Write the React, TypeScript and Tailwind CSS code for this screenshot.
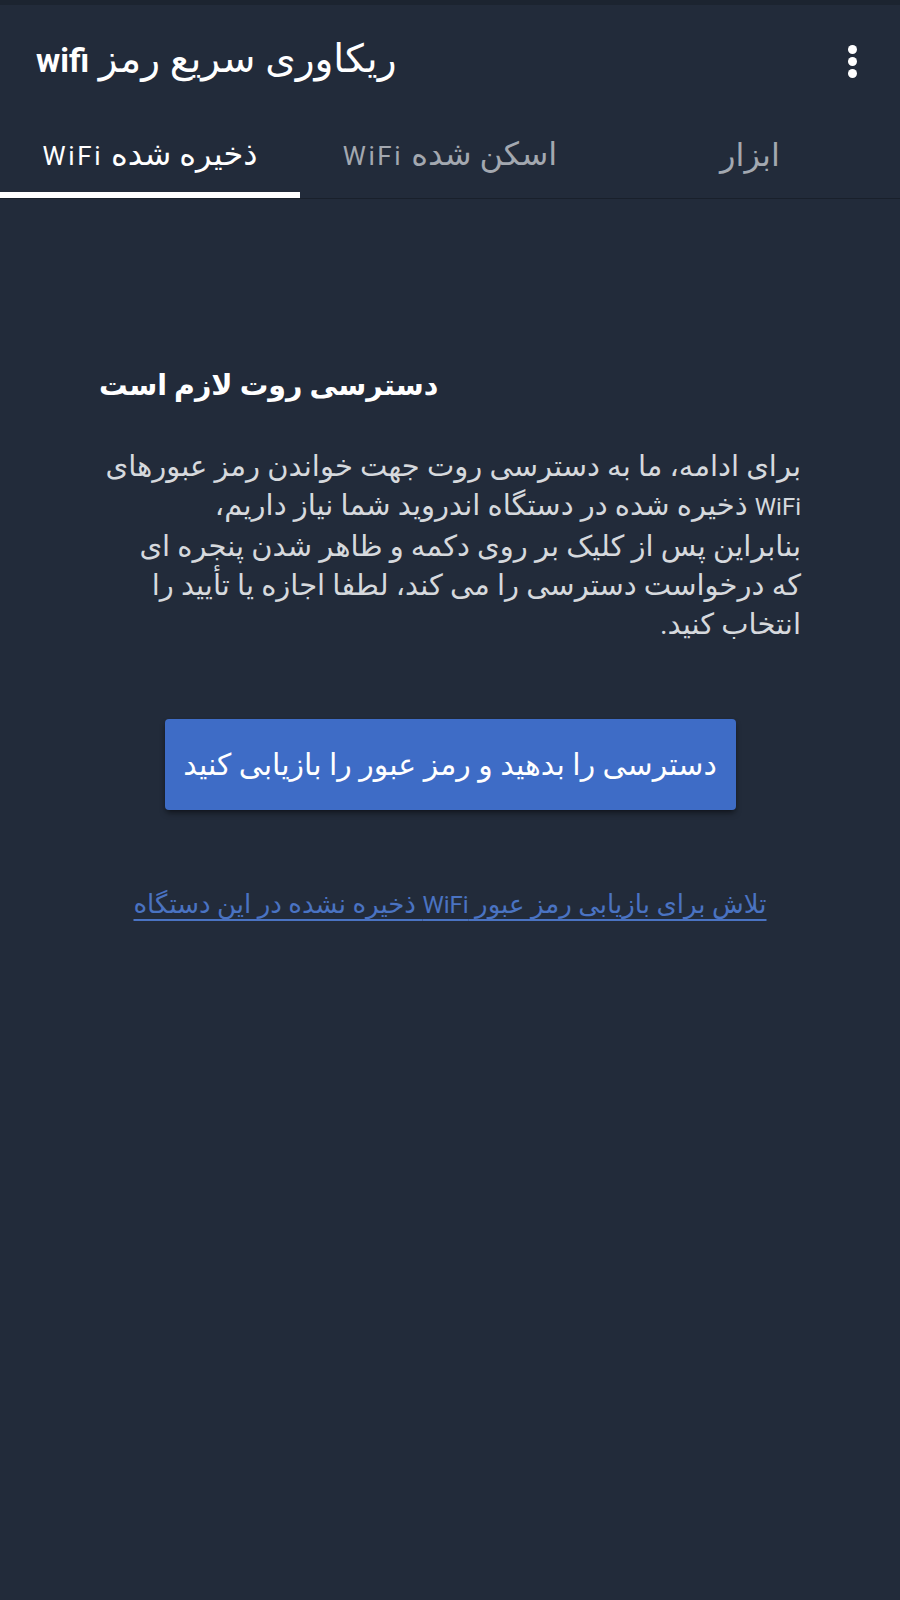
import React from 'react';

const tabs = [
  { id: 'saved', label: 'ذخیره شده WiFi', active: true },
  { id: 'scanned', label: 'اسکن شده WiFi', active: false },
  { id: 'tools', label: 'ابزار', active: false },
];

const bodyLines = [
  'برای ادامه، ما به دسترسی روت جهت خواندن رمز عبورهای',
  'WiFi ذخیره شده در دستگاه اندروید شما نیاز داریم،',
  'بنابراین پس از کلیک بر روی دکمه و ظاهر شدن پنجره ای',
  'که درخواست دسترسی را می کند، لطفا اجازه یا تأیید را',
  'انتخاب کنید.',
];

// Persian glyphs fall back to a much smaller face than the Latin one,
// so the latin words get their own size.
const Mixed = ({ text, latin }: { text: string; latin: string }) => (
  <>
    {text.split(/(WiFi|wifi)/).map((part, i) =>
      /^(WiFi|wifi)$/.test(part) ? (
        <span key={i} className={latin}>
          {part}
        </span>
      ) : (
        <React.Fragment key={i}>{part}</React.Fragment>
      )
    )}
  </>
);

const KebabMenu = () => (
  <button className="flex flex-col items-center gap-[3px] px-2" aria-label="More options">
    <span className="w-[9px] h-[9px] rounded-full bg-white" />
    <span className="w-[9px] h-[9px] rounded-full bg-white" />
    <span className="w-[9px] h-[9px] rounded-full bg-white" />
  </button>
);

export default function App() {
  return (
    <div
      className="w-[900px] h-[1600px] bg-[#222b3a] text-white overflow-hidden"
      style={{ fontFamily: "Roboto, 'DejaVu Sans', sans-serif" }}
    >
      {/* status strip */}
      <div className="h-[5px] bg-[#1c2430]" />

      {/* app bar */}
      <header className="h-[113px] flex items-center justify-between pl-[36px] pr-[35px]">
        <h1 dir="rtl" className="text-[39px] leading-[48px] -mt-[3px]">
          <Mixed text="ریکاوری سریع رمز wifi" latin="text-[33px] font-bold" />
        </h1>
        <KebabMenu />
      </header>

      {/* tabs */}
      <nav className="border-b border-[#19202b]">
        <div className="grid grid-cols-3 h-[74px]">
          {tabs.map((tab) => (
            <div
              key={tab.id}
              dir="rtl"
              className={`flex items-center justify-center text-[32px] leading-[40px] ${
                tab.active ? 'text-white' : 'text-[#a3a8b0]'
              }`}
            >
              <span>
                <Mixed text={tab.label} latin="text-[26px] tracking-[0.1em]" />
              </span>
            </div>
          ))}
        </div>
        <div className="w-[300px] h-[6px] bg-white" />
      </nav>

      {/* content */}
      <main className="px-[99px] pt-[166px]">
        <h2 dir="rtl" className="text-left text-[28.5px] font-bold leading-[42px]">
          دسترسی روت لازم است
        </h2>

        <p
          dir="rtl"
          className="mt-[40px] text-right text-[29px] leading-[39px] text-[#d6d9dd] whitespace-nowrap"
        >
          {bodyLines.map((line, i) => (
            <React.Fragment key={i}>
              <Mixed text={line} latin="text-[24px]" />
              {i < bodyLines.length - 1 && <br />}
            </React.Fragment>
          ))}
        </p>

        <div className="flex justify-center mt-[75px]">
          <button
            dir="rtl"
            className="w-[571px] h-[91px] rounded-[4px] bg-[#3e6cc6] text-white text-[30px] leading-[40px] shadow-md shadow-black/40"
          >
            دسترسی را بدهید و رمز عبور را بازیابی کنید
          </button>
        </div>

        <div className="flex justify-center mt-[76px]">
          <a
            href="#"
            dir="rtl"
            className="text-[26px] leading-[36px] text-[#4a73c2] underline underline-offset-[6px] whitespace-nowrap"
          >
            <Mixed
              text="تلاش برای بازیابی رمز عبور WiFi ذخیره نشده در این دستگاه"
              latin="text-[24px]"
            />
          </a>
        </div>
      </main>
    </div>
  );
}
